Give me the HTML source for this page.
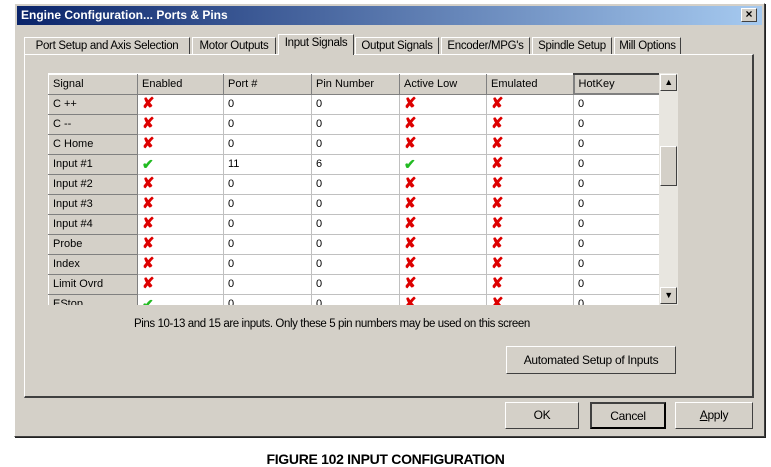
<!DOCTYPE html>
<html><head><style>
*{margin:0;padding:0;box-sizing:border-box}
body{width:771px;height:467px;background:#fff;position:relative;overflow:hidden;font-family:"Liberation Sans",sans-serif;font-size:11px;color:#000}
.a{position:absolute}
.dlg{left:14px;top:3px;width:751px;height:434px;background:#d4d0c8;border:1px solid #fff;border-right-color:#404040;border-bottom-color:#404040;box-shadow:1px 1px 0 #222}
.title{left:17px;top:6px;width:745px;height:19px;background:linear-gradient(to right,#0a246a,#a6caf0);color:#fff;font-weight:bold;font-size:12px;line-height:19px;padding-left:4px}
.xb{left:741px;top:8px;width:16px;height:14px;background:#d4d0c8;border:1px solid #fff;border-right-color:#404040;border-bottom-color:#404040;font-size:12px;font-weight:bold;line-height:11px;text-align:center}
.tab{top:37px;height:18px;border:1px solid #fff;border-right-color:#404040;border-bottom:none;line-height:16px;text-align:center;font-size:11.5px;letter-spacing:-0.3px}
.panel{left:24px;top:54px;width:730px;height:344px;border:1px solid #fff;border-right:2px solid #404040;border-bottom:2px solid #404040}
table{border-collapse:collapse;position:absolute;left:48px;top:73px;table-layout:fixed}
td{height:20px;border:1px solid #c0c0c0;background:#fff;padding-left:4px;font-size:11px;white-space:nowrap;overflow:hidden}
td.h{background:#d4d0c8;border:1px solid #808080;border-top-color:#fff;border-left-color:#fff}
.x{color:#d00;font-weight:bold;font-size:15px;line-height:12px}
.c{color:#2b2;font-weight:bold;font-size:14px}
.btn{height:27px;background:#d4d0c8;border:1px solid #fff;border-right-color:#404040;border-bottom-color:#404040;text-align:center;line-height:25px;font-size:12px;letter-spacing:-0.3px}
</style></head><body>
<div class="a dlg"></div>
<div class="a title">Engine Configuration... Ports &amp; Pins</div>
<div class="a xb">×</div>
<div class="a tab" style="left:24px;width:166px">Port Setup and Axis Selection</div>
<div class="a tab" style="left:192px;width:84px">Motor Outputs</div>
<div class="a tab" style="left:278px;width:76px;top:34px;height:21px;background:#d4d0c8;z-index:2">Input Signals</div>
<div class="a tab" style="left:355px;width:84px">Output Signals</div>
<div class="a tab" style="left:441px;width:89px">Encoder/MPG's</div>
<div class="a tab" style="left:532px;width:80px">Spindle Setup</div>
<div class="a tab" style="left:614px;width:67px">Mill Options</div>
<div class="a panel"></div>
<div class="a" style="left:48px;top:73px;width:630px;height:232px;background:#fff;overflow:hidden">
<table style="left:0;top:0">
<colgroup><col style="width:89px"><col style="width:86px"><col style="width:88px"><col style="width:88px"><col style="width:87px"><col style="width:87px"><col style="width:86px"></colgroup>
<tr><td class="h">Signal</td><td class="h">Enabled</td><td class="h">Port #</td><td class="h">Pin Number</td><td class="h">Active Low</td><td class="h">Emulated</td><td class="h" style="border:2px solid #808080;border-top-color:#404040">HotKey</td></tr>
<tr><td class="h">C ++</td><td class="x">✘</td><td>0</td><td>0</td><td class="x">✘</td><td class="x">✘</td><td>0</td></tr>
<tr><td class="h">C --</td><td class="x">✘</td><td>0</td><td>0</td><td class="x">✘</td><td class="x">✘</td><td>0</td></tr>
<tr><td class="h">C Home</td><td class="x">✘</td><td>0</td><td>0</td><td class="x">✘</td><td class="x">✘</td><td>0</td></tr>
<tr><td class="h">Input #1</td><td class="c">✔</td><td>11</td><td>6</td><td class="c">✔</td><td class="x">✘</td><td>0</td></tr>
<tr><td class="h">Input #2</td><td class="x">✘</td><td>0</td><td>0</td><td class="x">✘</td><td class="x">✘</td><td>0</td></tr>
<tr><td class="h">Input #3</td><td class="x">✘</td><td>0</td><td>0</td><td class="x">✘</td><td class="x">✘</td><td>0</td></tr>
<tr><td class="h">Input #4</td><td class="x">✘</td><td>0</td><td>0</td><td class="x">✘</td><td class="x">✘</td><td>0</td></tr>
<tr><td class="h">Probe</td><td class="x">✘</td><td>0</td><td>0</td><td class="x">✘</td><td class="x">✘</td><td>0</td></tr>
<tr><td class="h">Index</td><td class="x">✘</td><td>0</td><td>0</td><td class="x">✘</td><td class="x">✘</td><td>0</td></tr>
<tr><td class="h">Limit Ovrd</td><td class="x">✘</td><td>0</td><td>0</td><td class="x">✘</td><td class="x">✘</td><td>0</td></tr>
<tr><td class="h">EStop</td><td class="c">✔</td><td>0</td><td>0</td><td class="x">✘</td><td class="x">✘</td><td>0</td></tr>
</table>
<div class="a" style="left:611px;top:0;width:19px;height:232px;background:#e8e6e0"></div>
<div class="a btn" style="left:612px;top:1px;width:17px;height:17px;line-height:14px;font-size:9px">▲</div>
<div class="a btn" style="left:612px;top:73px;width:17px;height:40px"></div>
<div class="a btn" style="left:612px;top:214px;width:17px;height:17px;line-height:14px;font-size:9px">▼</div>
</div>
<div class="a" style="left:134px;top:318px;font-size:11.5px;letter-spacing:-0.4px">Pins 10-13 and 15 are inputs. Only these 5 pin numbers may be used on this screen</div>
<div class="a btn" style="left:506px;top:346px;width:170px;height:28px;line-height:26px">Automated Setup of Inputs</div>
<div class="a btn" style="left:505px;top:402px;width:74px">OK</div>
<div class="a btn" style="left:590px;top:402px;width:76px;border:2px solid #000;border-top-color:#404040;border-left-color:#404040">Cancel</div>
<div class="a btn" style="left:675px;top:402px;width:78px"><u>A</u>pply</div>
<div class="a" style="left:0;top:451px;width:771px;text-align:center;font-weight:bold;font-size:14px;letter-spacing:-0.3px">FIGURE 102 INPUT CONFIGURATION</div>
</body></html>
